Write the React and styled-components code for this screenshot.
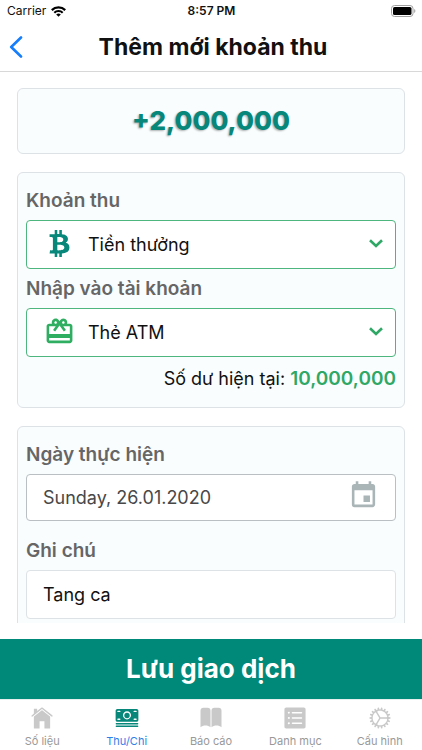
import React, { useState } from "react";
import styled, { createGlobalStyle } from "styled-components";
import { FaBtc } from "react-icons/fa";
import { MdCardGiftcard, MdEvent } from "react-icons/md";
import { IoIosHome, IoIosCash, IoIosListBox, IoIosCog } from "react-icons/io";

const GlobalStyle = createGlobalStyle`
  * { box-sizing: border-box; }
  body { margin: 0; background: #fff; }
  body, button, input, select { font-family: Inter, "Noto Sans", sans-serif; }
`;

const Screen = styled.div`
  display: flex;
  flex-direction: column;
  height: 100vh;
  background: #fff;
  color: #111;
`;

const StatusBar = styled.div`
  display: grid;
  grid-template-columns: 1fr auto 1fr;
  align-items: center;
  height: 22px;
  flex: none;
  padding: 0 6px 0 7px;
  font-size: 12px;
  line-height: 16px;
`;

const Carrier = styled.span`
  display: flex;
  align-items: center;
  gap: 5px;
`;

const Clock = styled.time`
  font-weight: 600;
`;

const Battery = styled.svg`
  justify-self: end;
`;

const Header = styled.header`
  display: grid;
  grid-template-columns: 40px 1fr 36px;
  align-items: center;
  flex: none;
  height: 50px;
  border-bottom: 1px solid #d8d8d8;
`;

const BackButton = styled.button`
  display: flex;
  align-items: center;
  height: 48px;
  padding: 0 0 0 9px;
  border: 0;
  background: none;
  color: #167efb;
`;

const Title = styled.h1`
  margin: 0;
  font-size: 23px;
  line-height: 28px;
  font-weight: 700;
  text-align: center;
  white-space: nowrap;
`;

const Form = styled.main`
  display: flex;
  flex-direction: column;
  gap: 18px;
  flex: 1;
  min-height: 0;
  margin-bottom: 16px;
  padding: 16px 17px 0;
  overflow-y: auto;
  scrollbar-width: none;
`;

const Card = styled.section`
  flex: none;
  padding: 16px 8px;
  border: 1px solid #dde2e6;
  border-radius: 6px;
  background: #f9fdfe;
`;

const Amount = styled.output`
  display: block;
  color: #07867a;
  font-size: 26px;
  line-height: 32px;
  font-weight: 800;
  text-align: center;
  text-shadow: -1px 1px 2px rgba(0, 0, 0, 0.3);
`;

const Groups = styled.div`
  display: grid;
  gap: ${(p) => p.$gap}px;
`;

const Label = styled.label`
  display: block;
  margin-bottom: 7px;
  color: #666;
  font-size: 19px;
  line-height: 24px;
  font-weight: 600;
`;

const SelectField = styled.div`
  display: grid;
  grid-template-columns: 61px 1fr 38px;
  align-items: center;
  height: 49px;
  border: 1px solid #4db57e;
  border-radius: 4px;
  background: #fff;
`;

const FieldIcon = styled.span`
  display: flex;
  justify-content: center;
  grid-row: 1;
  grid-column: ${(p) => p.$column};
  z-index: 1;
  padding: ${(p) => (p.$column === 1 ? "0 0 2px 4px" : "0 0 2px")};
  color: ${(p) => p.$color};
  pointer-events: none;
`;

const Select = styled.select`
  grid-row: 1;
  grid-column: 1 / -1;
  width: 100%;
  height: 47px;
  padding: 0 38px 0 61px;
  border: 0;
  border-radius: 4px;
  appearance: none;
  background: transparent;
  color: #111;
  font-size: 18px;
`;

const Balance = styled.p`
  margin: 10px 0 0;
  font-size: 18px;
  line-height: 24px;
  text-align: right;
`;

const BalanceValue = styled.strong`
  color: #2fa866;
  font-size: 19px;
  font-weight: 600;
`;

const InputField = styled.div`
  display: flex;
  align-items: center;
  height: ${(p) => (p.$strong ? 47 : 49)}px;
  padding: 0 16px;
  border: 1px solid ${(p) => (p.$strong ? "#b9bfc2" : "#dde2e6")};
  border-radius: 4px;
  background: #fff;
`;

const TextInput = styled.input`
  flex: 1;
  min-width: 0;
  height: 100%;
  padding: 0;
  border: 0;
  outline: 0;
  background: transparent;
  color: ${(p) => (p.$muted ? "#484848" : "#111")};
  font-size: 18px;
`;

const CalendarButton = styled.button`
  display: flex;
  padding: 0 0 4px;
  border: 0;
  background: none;
  color: #aab5b8;
`;

const SaveButton = styled.button`
  flex: none;
  height: 60px;
  border: 0;
  background: #008878;
  color: #fff;
  font-size: 26px;
  line-height: 32px;
  font-weight: 700;
`;

const TabBar = styled.nav`
  display: grid;
  grid-template-columns: repeat(5, 1fr);
  flex: none;
  height: 51px;
  border-top: 1px solid #e6eeee;
`;

const Tab = styled.a`
  display: flex;
  flex-direction: column;
  align-items: center;
  gap: 2px;
  padding-top: 5px;
  color: ${(p) => (p.$active ? "#2f80ea" : "#999")};
  font-size: 11px;
  line-height: 16px;
  text-decoration: none;

  svg {
    color: ${(p) => (p.$active ? "#07867a" : "#c9c9c9")};
  }
`;

function Chevron() {
  return (
    <svg width="14" height="9" viewBox="0 0 14 9" fill="none" stroke="currentColor" strokeWidth="2.6" aria-hidden="true">
      <path d="M1 1.2 7 7 13 1.2" />
    </svg>
  );
}

function Ribbons({ size }) {
  return (
    <svg width={size} height={size} viewBox="0 0 26 26" fill="currentColor" aria-hidden="true">
      <path d="M2.5 22.3V5.8a3 3 0 0 1 3-3h4a3 3 0 0 1 3 3v16.5c-2.6-2.5-7.4-2.5-10 0Z" />
      <path d="M13.5 22.3V5.8a3 3 0 0 1 3-3h4a3 3 0 0 1 3 3v16.5c-2.6-2.5-7.4-2.5-10 0Z" />
    </svg>
  );
}

function Picker({ id, label, icon, color, options }) {
  return (
    <div>
      <Label htmlFor={id}>{label}</Label>
      <SelectField>
        <FieldIcon $column={1} $color={color}>{icon}</FieldIcon>
        <Select id={id}>
          {options.map((o) => <option key={o}>{o}</option>)}
        </Select>
        <FieldIcon $column={3} $color="#2fa866"><Chevron /></FieldIcon>
      </SelectField>
    </div>
  );
}

const tabs = [
  { label: "Số liệu", Icon: IoIosHome },
  { label: "Thu/Chi", Icon: IoIosCash, active: true },
  { label: "Báo cáo", Icon: Ribbons },
  { label: "Danh mục", Icon: IoIosListBox },
  { label: "Cấu hình", Icon: IoIosCog },
];

export default function App() {
  const [date, setDate] = useState("Sunday, 26.01.2020");
  const [note, setNote] = useState("Tang ca");

  return (
    <Screen>
      <GlobalStyle />
      <StatusBar>
        <Carrier>
          Carrier
          <svg width="15" height="11" viewBox="0 0 15 11" fill="none" stroke="#000" aria-hidden="true">
            <path d="M.8 4.1a9.6 9.6 0 0 1 13.4 0" strokeWidth="2.3" />
            <path d="M3.3 6.7a6 6 0 0 1 8.4 0" strokeWidth="2.1" />
            <path d="M7.5 10.8 5.2 8.5a3.3 3.3 0 0 1 4.6 0Z" fill="#000" stroke="none" />
          </svg>
        </Carrier>
        <Clock>8:57 PM</Clock>
        <Battery width="25" height="12" viewBox="0 0 25 12" aria-hidden="true">
          <rect x=".5" y=".5" width="21.5" height="11" rx="3" fill="none" stroke="#a0a0a0" />
          <rect x="2" y="2" width="18.5" height="8" rx="1.6" />
          <path d="M23.2 4v4c1.6-.7 1.6-3.3 0-4Z" fill="#a0a0a0" />
        </Battery>
      </StatusBar>
      <Header>
        <BackButton type="button" aria-label="Back">
          <svg width="14" height="22" viewBox="0 0 14 22" fill="none" stroke="currentColor" strokeWidth="2.6" strokeLinecap="round" strokeLinejoin="round" aria-hidden="true">
            <path d="M12 1.5 2.2 11 12 20.5" />
          </svg>
        </BackButton>
        <Title>Thêm mới khoản thu</Title>
      </Header>
      <Form>
        <Card>
          <Amount>+2,000,000</Amount>
        </Card>
        <Card>
          <Groups $gap={8}>
            <Picker id="category" label="Khoản thu" icon={<FaBtc size={27} />} color="#07867a" options={["Tiền thưởng"]} />
            <Picker id="account" label="Nhập vào tài khoản" icon={<MdCardGiftcard size={31} />} color="#2fae62" options={["Thẻ ATM"]} />
          </Groups>
          <Balance>
            Số dư hiện tại: <BalanceValue>10,000,000</BalanceValue>
          </Balance>
        </Card>
        <Card>
          <Groups $gap={18}>
            <div>
              <Label htmlFor="date">Ngày thực hiện</Label>
              <InputField $strong>
                <TextInput id="date" $muted value={date} onChange={(e) => setDate(e.target.value)} />
                <CalendarButton type="button" aria-label="Calendar"><MdEvent size={31} /></CalendarButton>
              </InputField>
            </div>
            <div>
              <Label htmlFor="note">Ghi chú</Label>
              <InputField>
                <TextInput id="note" value={note} onChange={(e) => setNote(e.target.value)} />
              </InputField>
            </div>
          </Groups>
        </Card>
      </Form>
      <SaveButton type="button">Lưu giao dịch</SaveButton>
      <TabBar>
        {tabs.map(({ label, Icon, active }) => (
          <Tab key={label} href="#" $active={active} aria-current={active ? "page" : undefined}>
            <Icon size={26} />
            {label}
          </Tab>
        ))}
      </TabBar>
    </Screen>
  );
}
